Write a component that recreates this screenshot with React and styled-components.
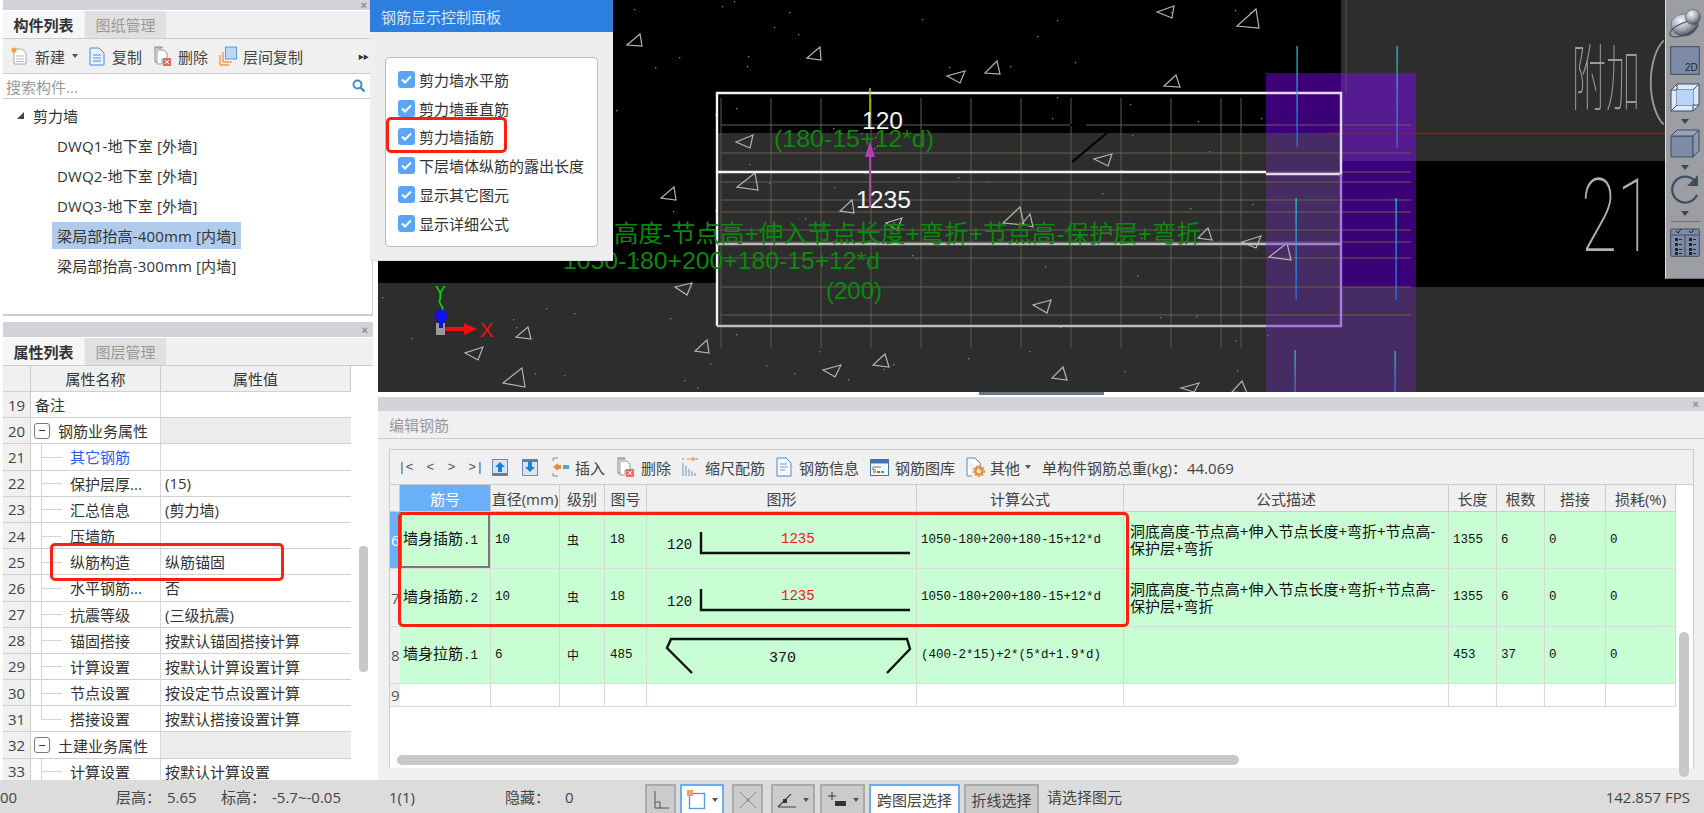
import React from 'react';
import styled, { createGlobalStyle } from 'styled-components';

const UI_FONT = '"Open Sans", "Noto Sans CJK SC", sans-serif';
const CELL_FONT = '"Liberation Mono", "Noto Sans CJK SC", monospace';

const GlobalStyle = createGlobalStyle`
  html, body { margin: 0; padding: 0; background: #fff; }
  body { font-family: ${UI_FONT}; font-size: 15px; color: #333; }
`;

const Page = styled.div`
  width: 1704px;
  height: 813px;
  display: flex;
  flex-direction: column;
  overflow: hidden;
  background: #fff;
`;

const Main = styled.div`
  height: 780px;
  display: flex;
`;

const LeftColumn = styled.div`
  width: 378px;
  flex: none;
  display: flex;
  flex-direction: column;
  gap: 6px;
  padding: 0 5px 0 3px;
  box-sizing: border-box;
`;

const RightColumn = styled.div`
  flex: 1;
  min-width: 0;
  display: flex;
  flex-direction: column;
`;

const DockHead = styled.div`
  height: ${(p) => p.$h}px;
  flex: none;
  background: #d2d3d8;
  display: flex;
  justify-content: flex-end;
  align-items: center;
  padding-right: 5px;
  font: bold 11px/10px "Liberation Sans", sans-serif;
  color: #8a8a8a;
`;

const TopDock = styled.div`
  height: 316px;
  flex: none;
  display: flex;
  flex-direction: column;
  border-right: 1px solid #ccc;
  border-bottom: 2px solid #ccc;
  box-sizing: border-box;
`;

const BottomDock = styled.div`
  flex: 1;
  min-height: 0;
  display: flex;
  flex-direction: column;
`;

const TabBar = styled.div`
  height: 27px;
  flex: none;
  margin-top: 1px;
  display: flex;
  gap: 1px;
  background: #f0f0f0;
  border-bottom: 1px solid #ccc;
`;

const Tab = styled.div`
  width: 81px;
  display: flex;
  align-items: center;
  justify-content: center;
  font-size: 15px;
  font-weight: ${(p) => (p.$active ? 700 : 400)};
  color: ${(p) => (p.$active ? '#333' : '#999')};
  background: ${(p) => (p.$active ? '#f6f6f6' : '#e0e0e0')};
`;

const ListToolbar = styled.div`
  height: 34px;
  flex: none;
  display: flex;
  align-items: center;
  gap: 11px;
  padding: 0 4px 0 8px;
  background: #f0f0f0;
  border-bottom: 1px solid #ccc;
`;

const ToolItem = styled.div`
  display: flex;
  align-items: center;
  gap: ${(p) => p.$gap || 6}px;
  margin-left: ${(p) => p.$ml || 0}px;
  color: #444;
  white-space: nowrap;
`;

const MoreMark = styled.div`
  margin-left: auto;
  font-size: 6px;
  letter-spacing: -1px;
  color: #333;
`;

const SearchRow = styled.div`
  height: 24px;
  flex: none;
  display: flex;
  align-items: center;
  justify-content: space-between;
  padding: 0 6px 0 3px;
  color: #9a9a9a;
  border-bottom: 1px solid #ccc;
`;

const Tree = styled.div`
  flex: 1;
  padding-top: 1px;
  display: flex;
  flex-direction: column;
`;

const TreeRoot = styled.div`
  height: 30px;
  display: flex;
  align-items: center;
  gap: 9px;
  padding-left: 14px;
`;

const TreeTriangle = styled.span`
  width: 0;
  height: 0;
  border-left: 7px solid transparent;
  border-bottom: 7px solid #444;
`;

const TreeLeaf = styled.div`
  height: 30px;
  display: flex;
  align-items: center;
  padding-left: 49px;
`;

const LeafLabel = styled.span`
  padding: 3px 5px;
  letter-spacing: 0.15px;
  background: ${(p) => (p.$selected ? '#b0cbec' : 'transparent')};
`;

const PropBody = styled.div`
  flex: 1;
  min-height: 0;
  display: flex;
  overflow: hidden;
`;

const PropTable = styled.div`
  width: 348px;
  flex: none;
`;

const PropRowWrap = styled.div`
  height: ${(p) => p.$h || 26.2}px;
  box-sizing: border-box;
  display: grid;
  grid-template-columns: 28px 130px 190px;
  border-bottom: 1px solid #d0d0d0;
`;

const PropHeadCell = styled.div`
  background: #f0f0f0;
  border-right: 1px solid #ccc;
  display: flex;
  align-items: center;
  justify-content: center;
`;

const PropNo = styled.div`
  background: #f0f0f0;
  border-right: 1px solid #ccc;
  display: flex;
  align-items: center;
  justify-content: center;
  font-size: 15px;
  color: #444;
`;

const PropName = styled.div`
  position: relative;
  display: flex;
  align-items: center;
  gap: 8px;
  padding-left: ${(p) => (p.$child ? 39 : 4)}px;
  border-right: 1px solid #d8d8d8;
  white-space: nowrap;
  color: ${(p) => (p.$link ? '#2a5cf0' : '#333')};
  ${(p) =>
    p.$child &&
    `
    &::before {
      content: '';
      position: absolute;
      left: 10px;
      top: 0;
      bottom: ${p.$last ? '50%' : '-1px'};
      border-left: 1px solid #d4d4d4;
    }
    &::after {
      content: '';
      position: absolute;
      left: 10px;
      top: 50%;
      width: 21px;
      border-top: 1px solid #d4d4d4;
    }
  `}
`;

const PropValue = styled.div`
  display: flex;
  align-items: center;
  padding-left: 4px;
  white-space: nowrap;
  background: ${(p) => (p.$group ? '#ececec' : 'transparent')};
`;

const MinusBox = styled.span`
  width: 14px;
  height: 14px;
  margin-left: -1px;
  border: 1px solid #777;
  border-radius: 3px;
  display: flex;
  align-items: center;
  justify-content: center;
  font: 13px/1 "Liberation Sans", sans-serif;
  color: #333;
`;

const PropScroll = styled.div`
  flex: 1;
  padding-left: 8px;
`;

const PropThumb = styled.div`
  width: 9px;
  height: 126px;
  margin-top: 180px;
  border-radius: 4px;
  background: #c8c8c8;
`;

const Canvas = styled.div`
  height: 392px;
  flex: none;
  position: relative;
  background: #000;
`;

const CanvasArt = styled.svg`
  display: block;
  width: 1326px;
  height: 392px;
`;

const GreenText = styled.text`
  font-family: "Liberation Sans", "Noto Sans CJK SC", sans-serif;
  font-size: 24px;
  fill: #0a8a0a;
`;

const DimText = styled.text`
  font-family: "Liberation Sans", sans-serif;
  font-size: 24px;
  fill: #f4f4f4;
`;

const CadText = styled.text`
  font-family: Roboto, "Noto Sans CJK SC", sans-serif;
  font-weight: 100;
  font-size: ${(p) => p.$size}px;
  fill: ${(p) => p.$fill || '#9a9a9a'};
`;

const AxisLabel = styled.text`
  font-family: "Liberation Sans", sans-serif;
  font-size: ${(p) => p.$size || 20}px;
  fill: ${(p) => p.$color};
`;

const ControlPanel = styled.div`
  position: absolute;
  left: -8px;
  top: 0;
  width: 243px;
  height: 261px;
  background: #eee;
  border-bottom: 1px solid #ddd;
  box-sizing: border-box;
  display: flex;
  flex-direction: column;
`;

const ControlTitle = styled.div`
  height: 32px;
  flex: none;
  display: flex;
  align-items: center;
  padding-left: 11px;
  background: #2c7fdf;
  color: #d6e6f8;
`;

const ControlBox = styled.div`
  margin: 25px 15px 0;
  height: 190px;
  box-sizing: border-box;
  padding-top: 7px;
  padding-left: 12px;
  background: #fff;
  border: 1px solid #bbb;
  border-radius: 4px;
`;

const CheckRow = styled.div`
  height: 28.8px;
  display: flex;
  align-items: center;
  gap: 4px;
  white-space: nowrap;
  color: #333;
`;

const CheckMark = styled.span`
  width: 17px;
  height: 17px;
  border-radius: 3px;
  background: #5aa5f5;
  display: flex;
  align-items: center;
  justify-content: center;
`;

const RedFrame = styled.div`
  position: absolute;
  left: ${(p) => p.$l}px;
  top: ${(p) => p.$t}px;
  width: ${(p) => p.$w}px;
  height: ${(p) => p.$h}px;
  box-sizing: border-box;
  border: 3px solid #fb2010;
  border-radius: 5px;
  pointer-events: none;
  z-index: 5;
`;

const ViewBar = styled.div`
  position: absolute;
  right: 0;
  top: 0;
  width: 39px;
  height: 279px;
  box-sizing: border-box;
  padding-top: 8px;
  background: #9d9ea3;
  border-left: 1px solid #ddd;
  border-bottom: 1px solid #777;
  display: flex;
  flex-direction: column;
  align-items: center;
`;

const ViewGap = styled.div`
  height: ${(p) => p.$h}px;
  flex: none;
`;

const ViewArrow = styled.div`
  width: 0;
  height: 0;
  margin: ${(p) => p.$m || '7px 0 5px'};
  border-left: 4px solid transparent;
  border-right: 4px solid transparent;
  border-top: 5px solid #3b4554;
`;

const ViewRule = styled.div`
  width: 29px;
  height: 1px;
  margin: 5px 0;
  background: #6f7177;
`;

const Splitter = styled.div`
  height: 5px;
  flex: none;
  display: flex;
  justify-content: center;
  background: #fff;
`;

const SplitHandle = styled.div`
  width: 125px;
  height: 3px;
  background: #6b7685;
`;

const Editor = styled.div`
  flex: 1;
  min-height: 0;
  display: flex;
  flex-direction: column;
  background: #f0f0f0;
`;

const EditorTitle = styled.div`
  height: 27px;
  flex: none;
  display: flex;
  align-items: center;
  padding-left: 11px;
  color: #999;
  border-bottom: 1px solid #ccc;
`;

const EditorFrame = styled.div`
  height: 319px;
  flex: none;
  margin: 10px 10px 0 11px;
  box-sizing: border-box;
  border: 1px solid #ccc;
  border-bottom: 0;
  display: flex;
  flex-direction: column;
  background: #fff;
`;

const BarToolbar = styled.div`
  height: 35px;
  flex: none;
  display: flex;
  align-items: center;
  gap: 11px;
  padding-left: 8px;
  background: #f0f0f0;
  border-bottom: 1px solid #ccc;
  box-sizing: border-box;
`;

const NavGroup = styled.div`
  display: flex;
  gap: 13px;
  width: 83px;
  flex: none;
  white-space: nowrap;
  font: 13px "Liberation Mono", monospace;
  color: #555;
`;

const TableWrap = styled.div`
  height: 270px;
  flex: none;
  display: flex;
`;

const BarTable = styled.div`
  width: 1286px;
  flex: none;
`;

const columns = '10px 91px 69px 45px 42px 270px 207px 325px 48px 48px 61px 70px';

const HeadRow = styled.div`
  height: 26px;
  display: grid;
  grid-template-columns: ${columns};
  background: #f0f0f0;
  border-bottom: 1px solid #ccc;
`;

const HeadCell = styled.div`
  display: flex;
  align-items: center;
  justify-content: center;
  white-space: nowrap;
  overflow: hidden;
  border-right: 1px solid #ccc;
  background: ${(p) => (p.$active ? '#6ab0f8' : 'transparent')};
  color: ${(p) => (p.$active ? '#fff' : '#444')};
`;

const BodyRow = styled.div`
  height: ${(p) => p.$h}px;
  box-sizing: border-box;
  display: grid;
  grid-template-columns: ${columns};
  background: ${(p) => (p.$empty ? '#fff' : '#c9fdd3')};
  border-bottom: 1px solid #d8dcd8;
`;

const RowHead = styled.div`
  display: flex;
  align-items: center;
  overflow: hidden;
  padding-left: 1px;
  font-size: 15px;
  background: ${(p) => (p.$active ? '#6ab0f8' : '#f0f0f0')};
  color: ${(p) => (p.$active ? '#fff' : '#555')};
`;

const BodyCell = styled.div`
  display: flex;
  align-items: center;
  box-sizing: border-box;
  padding-left: ${(p) => p.$pad ?? 4}px;
  border-right: 1px solid #d4dcd4;
  white-space: pre-line;
  overflow: hidden;
  color: #111;
  font-family: ${(p) => (p.$mono ? CELL_FONT : UI_FONT)};
  font-size: ${(p) => (p.$mono ? '12.5px' : `${p.$size || 15}px`)};
  line-height: 17px;
  ${(p) => p.$focus && 'box-shadow: inset 0 0 0 2px #777;'}
`;

const NameSuffix = styled.span`
  font-family: "Liberation Mono", monospace;
  font-size: 12.5px;
`;

const ShapeArt = styled.svg`
  display: block;
  width: 269px;
  height: 57px;
`;

const ShapeLabel = styled.text`
  font-family: "Liberation Mono", monospace;
  font-size: ${(p) => p.$size || 14}px;
  fill: ${(p) => p.$color || '#111'};
`;

const BarScroll = styled.div`
  flex: 1;
  padding-left: 3px;
`;

const BarThumb = styled.div`
  width: 10px;
  height: 145px;
  margin-top: 147px;
  border-radius: 5px;
  background: #c8c8c8;
  position: relative;
`;

const HScrollRow = styled.div`
  padding-left: 7px;
  height: 10px;
  flex: none;
`;

const HThumb = styled.div`
  width: 842px;
  height: 10px;
  border-radius: 5px;
  background: #c8c8c8;
`;

const StatusBar = styled.div`
  height: 33px;
  flex: none;
  display: flex;
  align-items: center;
  background: #dcdcdc;
  color: #444;
  font-size: 15px;
  white-space: nowrap;
`;

const StatusCell = styled.div`
  width: ${(p) => p.$w}px;
  flex: none;
`;

const StatusButton = styled.div`
  align-self: flex-end;
  height: 29px;
  box-sizing: border-box;
  margin-right: ${(p) => p.$mr ?? 4}px;
  width: ${(p) => p.$w}px;
  flex: none;
  display: flex;
  align-items: center;
  justify-content: center;
  gap: 6px;
  border: 2px solid ${(p) => (p.$on ? '#69aef5' : '#aaa')};
  border-bottom: 0;
  background: ${(p) => (p.$on ? '#fff' : '#cbcbcb')};
  color: #444;
`;

const SmallCaret = styled.span`
  width: 0;
  height: 0;
  border-left: 3px solid transparent;
  border-right: 3px solid transparent;
  border-top: 4px solid #555;
`;

const Fps = styled.div`
  margin-left: auto;
  padding-right: 14px;
`;

/* icons */
const DocNew = () => (
  <svg width="17" height="20" viewBox="0 0 17 20">
    <path d="M3 3h8l4 4v11H3z" fill="#fff" stroke="#aaa" />
    <path d="M5 10h8M5 13h8M5 15.5h8" stroke="#bbb" />
    <circle cx="3" cy="4" r="2.6" fill="#f5a23c" />
  </svg>
);
const DocCopy = () => (
  <svg width="16" height="20" viewBox="0 0 16 20">
    <path d="M1 2h9l5 5v12H1z" fill="#eaf2fb" stroke="#4a8ad0" />
    <path d="M4 9h8M4 12h8M4 15h8" stroke="#4a8ad0" />
  </svg>
);
const DocDelete = () => (
  <svg width="19" height="20" viewBox="0 0 19 20">
    <path d="M1 1h8l-0 1H2v14h4" fill="none" stroke="#888" />
    <path d="M4 4h7l3 3v6H9v5H4z" fill="#fff" stroke="#999" />
    <rect x="10" y="12" width="8" height="8" fill="#e96a6a" />
    <path d="M12 14l4 4M16 14l-4 4" stroke="#fff" />
  </svg>
);
const FloorCopy = () => (
  <svg width="18" height="20" viewBox="0 0 18 20">
    <path d="M1 19V9M1 19h9M4 16V6M4 16h9" fill="none" stroke="#ef9a4a" strokeWidth="1.4" />
    <rect x="6.5" y="1" width="11" height="12" fill="#bcd6f6" stroke="#5a9ae0" />
  </svg>
);
const SearchIcon = () => (
  <svg width="14" height="14" viewBox="0 0 14 14">
    <circle cx="5.5" cy="5.5" r="4" fill="none" stroke="#3d8fc9" strokeWidth="2" />
    <path d="M8.5 8.5l4 4" stroke="#3d8fc9" strokeWidth="2.4" />
  </svg>
);
const Caret = () => <SmallCaret />;

const ArrowBox = ({ down }) => (
  <svg width="16" height="17" viewBox="0 0 16 17">
    <rect x="0.5" y="0.5" width="15" height="16" fill="#d7e4f2" stroke="#6b8bb0" />
    <rect x="0.5" y={down ? 0.5 : 14} width="15" height="2.5" fill="#6b7d90" />
    <path
      d={down ? 'M8 13l-5-5h3V3h4v5h3z' : 'M8 3l5 5h-3v5H6V8H3z'}
      fill="#1f7fdc"
    />
  </svg>
);
const InsertIcon = () => (
  <svg width="17" height="20" viewBox="0 0 17 20">
    <path d="M6 1H1v3M1 16v3h5" fill="none" stroke="#888" />
    <path d="M1 10l5-4v2h3v4H6v2z" fill="#ef8a2a" />
    <rect x="11" y="8" width="6" height="4" fill="#5a9ae0" />
  </svg>
);
const ScaleIcon = () => (
  <svg width="16" height="20" viewBox="0 0 16 20">
    <path d="M5 2h8M10 0l3 2-3 2" fill="none" stroke="#ef8a2a" />
    <path d="M1 1v2M15 1v2" stroke="#888" />
    <path d="M1 6v13M4 9v10M7 12v7M10 14v5M13 16v3" stroke="#9ab4cc" strokeWidth="1.5" />
  </svg>
);
const InfoIcon = () => (
  <svg width="16" height="20" viewBox="0 0 16 20">
    <path d="M1 1h9l5 5v13H1z" fill="#f4f8fd" stroke="#4a8ad0" />
    <path d="M4 7h7M4 10h8M4 13h5" stroke="#8a9ab0" />
  </svg>
);
const LibraryIcon = () => (
  <svg width="19" height="17" viewBox="0 0 19 17">
    <rect x="0.5" y="0.5" width="18" height="16" fill="#f4f8fd" stroke="#3f74b0" />
    <rect x="0.5" y="0.5" width="18" height="4" fill="#3f74b0" />
    <path d="M3 8h8M3 8v3h3" fill="none" stroke="#777" />
    <path d="M3 13h3" stroke="#e0a030" strokeWidth="2" />
    <path d="M7 13h3" stroke="#d05050" strokeWidth="2" />
    <path d="M11 13h3" stroke="#50a050" strokeWidth="2" />
  </svg>
);
const OtherIcon = () => (
  <svg width="19" height="20" viewBox="0 0 19 20">
    <path d="M1 1h8l5 5v8M6 19H1V1" fill="#fff" stroke="#4a8ad0" />
    <circle cx="13" cy="14" r="3.6" fill="none" stroke="#ef8a2a" strokeWidth="2.4" />
    <circle cx="13" cy="14" r="5.4" fill="none" stroke="#ef8a2a" strokeWidth="1.2" strokeDasharray="2 1.6" />
  </svg>
);

const OrthoIcon = () => (
  <svg width="18" height="20" viewBox="0 0 18 20">
    <path d="M3 1v17h14" fill="none" stroke="#555" />
    <path d="M3 12h5v6" fill="none" stroke="#555" />
  </svg>
);
const SnapIcon = () => (
  <svg width="19" height="20" viewBox="0 0 19 20">
    <rect x="2.5" y="3.5" width="15" height="15" fill="#fff" stroke="#5a9ae0" strokeWidth="1.4" />
    <rect x="0" y="0" width="6" height="6" fill="#f0a060" />
  </svg>
);
const CrossIcon = () => (
  <svg width="18" height="20" viewBox="0 0 18 20">
    <path d="M1 2l16 16M17 2L1 18" stroke="#8a8a8a" />
    <rect x="7.5" y="8.5" width="3" height="3" fill="#9a9a9a" />
  </svg>
);
const AngleIcon = () => (
  <svg width="20" height="18" viewBox="0 0 20 18">
    <path d="M1 16h18M1 16L14 3" fill="none" stroke="#444" strokeWidth="1.2" />
    <rect x="6" y="8" width="4" height="4" fill="#333" />
  </svg>
);
const PlusBarIcon = () => (
  <svg width="20" height="18" viewBox="0 0 20 18">
    <path d="M5 1v8M1 5h8" stroke="#333" />
    <rect x="8" y="10" width="11" height="5" fill="#333" />
  </svg>
);

const GlobeIcon = () => (
  <svg width="33" height="30" viewBox="0 0 33 30">
    <defs>
      <radialGradient id="globe" cx="38%" cy="30%" r="75%">
        <stop offset="0" stopColor="#f6f7f9" />
        <stop offset="0.5" stopColor="#aab1bc" />
        <stop offset="1" stopColor="#3f4854" />
      </radialGradient>
    </defs>
    <ellipse cx="15" cy="17" rx="13" ry="11" fill="url(#globe)" stroke="#4f5864" strokeWidth="0.6" />
    <ellipse cx="15" cy="21" rx="15" ry="6" fill="none" stroke="#3f4854" transform="rotate(-22 15 21)" />
    <circle cx="24" cy="9" r="7.5" fill="url(#globe)" stroke="#4f5864" strokeWidth="0.6" />
  </svg>
);
const TwoDIcon = () => (
  <svg width="30" height="29" viewBox="0 0 30 29">
    <rect x="0.7" y="0.7" width="28.6" height="27.6" fill="#7d8ba5" stroke="#3e4c62" />
    <text x="15" y="25" fontFamily="Liberation Sans, sans-serif" fontSize="10" fill="#20262e">2D</text>
  </svg>
);
const WireCube = () => (
  <svg width="30" height="29" viewBox="0 0 30 29">
    <path d="M1 7L7 1h22v21l-6 6H1z" fill="#dbe9ff" stroke="#3e4c62" />
    <path d="M7 1v21h22M7 22l-6 6M1 7h22v21M23 7l6-6" fill="none" stroke="#3e4c62" />
    <rect x="7" y="7" width="16" height="15" fill="#b7d4fb" />
  </svg>
);
const SolidCube = () => (
  <svg width="30" height="29" viewBox="0 0 30 29">
    <path d="M1 7h22v21H1z" fill="#7d8ba5" stroke="#3e4c62" />
    <path d="M1 7l6-6h22l-6 6z" fill="#97a3b8" stroke="#3e4c62" />
    <path d="M23 7l6-6v21l-6 6z" fill="#8a97ad" stroke="#3e4c62" />
  </svg>
);
const RotateIcon = () => (
  <svg width="30" height="29" viewBox="0 0 30 29">
    <path d="M25 6A13 13 0 1 0 27 20" fill="none" stroke="#3e4c62" strokeWidth="2.2" />
    <path d="M28 0v11H17z" fill="#3e4c62" />
  </svg>
);
const ChecklistIcon = () => (
  <svg width="30" height="30" viewBox="0 0 30 30">
    <rect x="0.7" y="2" width="28.6" height="27.3" rx="1" fill="#7d8ba5" stroke="#3e4c62" />
    <path d="M1 8h28M15 8v21" stroke="#3e4c62" />
    <path d="M6 4l2 2 3-4M19 4l2 2 3-4" fill="none" stroke="#1d2530" />
    {[11, 16, 21, 25].map((y) => (
      <g key={y} fill="#1d2530">
        <rect x="5" y={y} width="3" height="3" />
        <rect x="9" y={y + 1} width="3" height="1" />
        <rect x="19" y={y} width="3" height="3" />
        <rect x="23" y={y + 1} width="3" height="1" />
      </g>
    ))}
  </svg>
);
const Tick = () => (
  <svg width="11" height="9" viewBox="0 0 11 9">
    <path d="M1 4.5l3 3 6-6" fill="none" stroke="#fff" strokeWidth="2" />
  </svg>
);

/* canvas data */
const triangles = [
  '640,34 627,45 642,46', '820,47 807,58 821,60', '674,187 661,198 676,200',
  '753,135 736,142 750,148', '755,173 737,187 758,190', '852,200 840,211 854,213',
  '692,283 675,287 687,295', '528,327 516,337 531,339', '483,347 465,353 478,360',
  '522,368 503,383 525,387', '707,340 695,351 709,353', '841,365 823,370 835,377',
  '1174,6 1157,12 1172,18', '1256,9 1237,26 1259,28', '965,71 947,76 960,83',
  '997,61 985,73 1000,74', '1176,75 1164,86 1180,87', '1112,154 1094,159 1108,166',
  '1020,207 1003,223 1024,225', '1030,214 1022,224 1033,227', '902,218 886,223 897,230',
  '1208,228 1198,238 1212,240', '1261,236 1242,242 1256,248', '1287,243 1269,257 1291,260',
  '1051,300 1033,305 1047,313', '885,354 873,365 889,367', '1063,367 1052,378 1067,380',
  '1199,383 1181,388 1194,392', '1242,381 1232,392 1247,393',
];

const dots = [];
let seed = 7;
for (let i = 0; i < 110; i += 1) {
  seed = (seed * 16807) % 2147483647;
  const x = 380 + (seed % 890);
  seed = (seed * 16807) % 2147483647;
  const y = seed % 390;
  dots.push([x, y]);
}

const gridX = [721, 771, 821, 871, 921, 971, 1021, 1071, 1121, 1171, 1221, 1241];
const gridY = [125, 153, 172, 182, 200, 212, 230, 242, 258, 287, 315];
const colorLines = [
  [1296.5, 46, 147], [1396.5, 46, 148], [1295.5, 198, 300],
  [1395.5, 198, 300], [1294.5, 350, 392], [1394.5, 351, 392],
];

const CanvasDrawing = () => (
  <CanvasArt viewBox="378 0 1326 392">
    <defs>
      <linearGradient id="rebarBlue" x1="0" y1="0" x2="0" y2="1">
        <stop offset="0" stopColor="#14d2d2" />
        <stop offset="1" stopColor="#3a6cf0" />
      </linearGradient>
    </defs>
    <rect x="378" y="283" width="339" height="109" fill="#2d2d2d" />
    <rect x="717" y="133" width="624" height="259" fill="#2d2d2d" />
    <rect x="1341" y="0" width="363" height="161" fill="#2d2d2d" />
    <rect x="1341" y="287" width="363" height="105" fill="#2d2d2d" />
    <rect x="1266" y="73" width="75" height="60" fill="#3c0078" />
    <rect x="1266" y="133" width="75" height="259" fill="#472c63" />
    <rect x="1341" y="73" width="75" height="88" fill="#561b90" />
    <rect x="1341" y="161" width="75" height="126" fill="#3c0078" />
    <rect x="1341" y="287" width="75" height="105" fill="#472c63" />
    {dots.map(([x, y]) => (
      <rect key={`${x}-${y}`} x={x} y={y} width="1.3" height="1.3" fill="#858585" />
    ))}
    {gridX.map((x) => (
      <line key={x} x1={x} x2={x} y1="98" y2="348" stroke="#5f5c48" />
    ))}
    {gridY.map((y) => (
      <line key={y} x1="721" x2="1411" y1={y} y2={y} stroke="#66634e" />
    ))}
    <line x1="1346" x2="1346" y1="0" y2="92" stroke="#555" />
    <line x1="1325" x2="1665" y1="133.5" y2="133.5" stroke="#8a2222" strokeWidth="1.4" />
    {triangles.map((t) => (
      <polygon key={t} points={t} fill="none" stroke="#b4b4b4" strokeWidth="1.2" />
    ))}
    <g fill="none" strokeWidth="2.4">
      <path d="M1266 93H717v233M717 172H1266" stroke="#f4f4f4" />
      <path d="M717 244H1266M717 326H1266" stroke="#bdbdbd" />
      <path d="M1266 93h75v81h-75" stroke="#e6d8f8" />
      <path d="M1266 244h75M1341 174v152h-75" stroke="#a87ae0" />
    </g>
    <path d="M1107 133L1072 162" stroke="#000" strokeWidth="2" />
    <path d="M1070 125h16" stroke="#000" strokeWidth="2" />
    {colorLines.map(([x, y1, y2]) => (
      <rect key={`${x}-${y1}`} x={x} y={y1} width="1.2" height={y2 - y1} fill="url(#rebarBlue)" />
    ))}
    <line x1="870" x2="870" y1="88" y2="118" stroke="#c8c800" strokeWidth="1.5" />
    <line x1="870" x2="870" y1="150" y2="207" stroke="#b040b0" strokeWidth="2" />
    <path d="M870 141l-5 16h10z" fill="#b040b0" />
    <GreenText x="774" y="147" textLength="160" lengthAdjust="spacingAndGlyphs">(180-15+12*d)</GreenText>
    <GreenText x="614" y="242" textLength="587" lengthAdjust="spacingAndGlyphs">高度-节点高+伸入节点长度+弯折+节点高-保护层+弯折</GreenText>
    <GreenText x="563" y="269" textLength="317" lengthAdjust="spacingAndGlyphs">1050-180+200+180-15+12*d</GreenText>
    <GreenText x="826" y="299" textLength="56" lengthAdjust="spacingAndGlyphs">(200)</GreenText>
    <DimText x="862" y="129" textLength="41" lengthAdjust="spacingAndGlyphs">120</DimText>
    <DimText x="856" y="208" textLength="55" lengthAdjust="spacingAndGlyphs">1235</DimText>
    <CadText $size="72" x="1572" y="104" textLength="68" lengthAdjust="spacingAndGlyphs">附加</CadText>
    <CadText $size="84" x="1645" y="106" textLength="20" lengthAdjust="spacingAndGlyphs">(</CadText>
    <CadText $size="102" $fill="#b0b0b0" x="1581" y="251" textLength="72" lengthAdjust="spacingAndGlyphs">21</CadText>
    <AxisLabel $color="#00e000" $size="16" x="435" y="298">Y</AxisLabel>
    <path d="M441 298c-6 6 6 8 0 14" fill="none" stroke="#10c810" strokeWidth="2" />
    <rect x="436" y="323" width="9" height="12" fill="#9a9a9a" />
    <rect x="439" y="312" width="4" height="16" fill="#1010e8" />
    <circle cx="441" cy="316" r="6.5" fill="#1010e8" />
    <path d="M445 327h19v-4l13 6-13 6v-4h-19z" fill="#f01010" />
    <AxisLabel $color="#f01010" x="480" y="337">X</AxisLabel>
  </CanvasArt>
);

/* table data */
const treeLeaves = [
  { name: 'DWQ1-地下室 [外墙]' },
  { name: 'DWQ2-地下室 [外墙]' },
  { name: 'DWQ3-地下室 [外墙]' },
  { name: '梁局部抬高-400mm [内墙]', selected: true },
  { name: '梁局部抬高-300mm [内墙]' },
];

const propRows = [
  { no: 19, name: '备注' },
  { no: 20, name: '钢筋业务属性', group: true },
  { no: 21, name: '其它钢筋', child: true, link: true },
  { no: 22, name: '保护层厚...', value: '(15)', child: true },
  { no: 23, name: '汇总信息', value: '(剪力墙)', child: true },
  { no: 24, name: '压墙筋', child: true },
  { no: 25, name: '纵筋构造', value: '纵筋锚固', child: true },
  { no: 26, name: '水平钢筋...', value: '否', child: true },
  { no: 27, name: '抗震等级', value: '(三级抗震)', child: true },
  { no: 28, name: '锚固搭接', value: '按默认锚固搭接计算', child: true },
  { no: 29, name: '计算设置', value: '按默认计算设置计算', child: true },
  { no: 30, name: '节点设置', value: '按设定节点设置计算', child: true },
  { no: 31, name: '搭接设置', value: '按默认搭接设置计算', child: true, last: true },
  { no: 32, name: '土建业务属性', group: true },
  { no: 33, name: '计算设置', value: '按默认计算设置', child: true },
];

const checks = ['剪力墙水平筋', '剪力墙垂直筋', '剪力墙插筋', '下层墙体纵筋的露出长度', '显示其它图元', '显示详细公式'];

const headers = ['筋号', '直径(mm)', '级别', '图号', '图形', '计算公式', '公式描述', '长度', '根数', '搭接', '损耗(%)'];

const formula = '1050-180+200+180-15+12*d';
const description = '洞底高度-节点高+伸入节点长度+弯折+节点高-\n保护层+弯折';

const rebars = [
  { no: 6, name: '墙身插筋', suffix: '.1', dia: 10, grade: '虫', fig: 18, shape: 'hook', formula, description, len: 1355, count: 6, h: 57, active: true },
  { no: 7, name: '墙身插筋', suffix: '.2', dia: 10, grade: '虫', fig: 18, shape: 'hook', formula, description, len: 1355, count: 6, h: 58 },
  { no: 8, name: '墙身拉筋', suffix: '.1', dia: 6, grade: '中', fig: 485, shape: 'tie', formula: '(400-2*15)+2*(5*d+1.9*d)', description: '', len: 453, count: 37, h: 57 },
];

const RebarShape = ({ kind }) => (
  <ShapeArt viewBox="0 0 269 57">
    {kind === 'hook' ? (
      <>
        <ShapeLabel x="20" y="37">120</ShapeLabel>
        <path d="M54 20v21h209" fill="none" stroke="#111" strokeWidth="2.4" />
        <ShapeLabel $color="#f01818" x="134" y="31">1235</ShapeLabel>
      </>
    ) : (
      <>
        <path d="M45 46L20 21l4-9h236l3 10-23 24" fill="none" stroke="#111" strokeWidth="2.4" />
        <ShapeLabel $size="15" x="122" y="35">370</ShapeLabel>
      </>
    )}
  </ShapeArt>
);

const PropRow = ({ row }) => (
  <PropRowWrap>
    <PropNo>{row.no}</PropNo>
    <PropName $child={row.child} $last={row.last} $link={row.link}>
      {row.group && <MinusBox>−</MinusBox>}
      {row.name}
    </PropName>
    <PropValue $group={row.group}>{row.value}</PropValue>
  </PropRowWrap>
);

const RebarRow = ({ row }) => (
  <BodyRow $h={row.h}>
    <RowHead $active={row.active}>{row.no}</RowHead>
    <BodyCell $focus={row.active} $pad={3}>
      <span>{row.name}<NameSuffix>{row.suffix}</NameSuffix></span>
    </BodyCell>
    <BodyCell $mono>{row.dia}</BodyCell>
    <BodyCell $pad={7} $size={12}>{row.grade}</BodyCell>
    <BodyCell $mono $pad={5}>{row.fig}</BodyCell>
    <BodyCell $pad={0}><RebarShape kind={row.shape} /></BodyCell>
    <BodyCell $mono>{row.formula}</BodyCell>
    <BodyCell $pad={6}>{row.description}</BodyCell>
    <BodyCell $mono>{row.len}</BodyCell>
    <BodyCell $mono>{row.count}</BodyCell>
    <BodyCell $mono>0</BodyCell>
    <BodyCell $mono>0</BodyCell>
  </BodyRow>
);

const EmptyRow = () => (
  <BodyRow $h={23} $empty>
    <RowHead>9</RowHead>
    {headers.map((h) => (
      <BodyCell key={h} />
    ))}
  </BodyRow>
);

export default function App() {
  return (
    <>
      <GlobalStyle />
      <Page>
        <Main>
          <LeftColumn>
            <TopDock>
              <DockHead $h={10}>×</DockHead>
              <TabBar>
                <Tab $active>构件列表</Tab>
                <Tab>图纸管理</Tab>
              </TabBar>
              <ListToolbar>
                <ToolItem $gap={7}><DocNew />新建<Caret /></ToolItem>
                <ToolItem $gap={7}><DocCopy />复制</ToolItem>
                <ToolItem><DocDelete />删除</ToolItem>
                <ToolItem><FloorCopy />层间复制</ToolItem>
                <MoreMark>▶▶</MoreMark>
              </ListToolbar>
              <SearchRow>搜索构件...<SearchIcon /></SearchRow>
              <Tree>
                <TreeRoot><TreeTriangle />剪力墙</TreeRoot>
                {treeLeaves.map((leaf) => (
                  <TreeLeaf key={leaf.name}>
                    <LeafLabel $selected={leaf.selected}>{leaf.name}</LeafLabel>
                  </TreeLeaf>
                ))}
              </Tree>
            </TopDock>
            <BottomDock>
              <DockHead $h={15}>×</DockHead>
              <TabBar>
                <Tab $active>属性列表</Tab>
                <Tab>图层管理</Tab>
              </TabBar>
              <PropBody>
                <PropTable>
                  <PropRowWrap $h={26}>
                    <PropHeadCell />
                    <PropHeadCell>属性名称</PropHeadCell>
                    <PropHeadCell>属性值</PropHeadCell>
                  </PropRowWrap>
                  {propRows.map((row) => (
                    <PropRow key={row.no} row={row} />
                  ))}
                </PropTable>
                <PropScroll><PropThumb /></PropScroll>
              </PropBody>
            </BottomDock>
          </LeftColumn>
          <RightColumn>
            <Canvas>
              <CanvasDrawing />
              <ControlPanel>
                <ControlTitle>钢筋显示控制面板</ControlTitle>
                <ControlBox>
                  {checks.map((label) => (
                    <CheckRow key={label}>
                      <CheckMark><Tick /></CheckMark>
                      {label}
                    </CheckRow>
                  ))}
                </ControlBox>
              </ControlPanel>
              <ViewBar>
                <GlobeIcon />
                <ViewGap $h={8} />
                <TwoDIcon />
                <ViewGap $h={8} />
                <WireCube />
                <ViewArrow />
                <SolidCube />
                <ViewArrow />
                <RotateIcon />
                <ViewArrow $m="7px 0 0" />
                <ViewRule />
                <ChecklistIcon />
              </ViewBar>
            </Canvas>
            <Splitter><SplitHandle /></Splitter>
            <Editor>
              <DockHead $h={14}>×</DockHead>
              <EditorTitle>编辑钢筋</EditorTitle>
              <EditorFrame>
                <BarToolbar>
                  <NavGroup>
                    <span>|&lt;</span><span>&lt;</span><span>&gt;</span><span>&gt;|</span>
                  </NavGroup>
                  <ToolItem><ArrowBox /></ToolItem>
                  <ToolItem $ml={3}><ArrowBox down /></ToolItem>
                  <ToolItem $ml={3}><InsertIcon />插入</ToolItem>
                  <ToolItem><DocDelete />删除</ToolItem>
                  <ToolItem $gap={7}><ScaleIcon />缩尺配筋</ToolItem>
                  <ToolItem $gap={7}><InfoIcon />钢筋信息</ToolItem>
                  <ToolItem><LibraryIcon />钢筋图库</ToolItem>
                  <ToolItem $gap={5}><OtherIcon />其他<Caret /></ToolItem>
                  <ToolItem>单构件钢筋总重(kg)：44.069</ToolItem>
                </BarToolbar>
                <TableWrap>
                  <BarTable>
                    <HeadRow>
                      <HeadCell />
                      {headers.map((h, i) => (
                        <HeadCell key={h} $active={i === 0}>{h}</HeadCell>
                      ))}
                    </HeadRow>
                    {rebars.map((row) => (
                      <RebarRow key={row.no} row={row} />
                    ))}
                    <EmptyRow />
                  </BarTable>
                  <BarScroll><BarThumb /></BarScroll>
                </TableWrap>
                <HScrollRow><HThumb /></HScrollRow>
              </EditorFrame>
            </Editor>
          </RightColumn>
        </Main>
        <StatusBar>
          <StatusCell $w={116}>00</StatusCell>
          <StatusCell $w={51}>层高：</StatusCell>
          <StatusCell $w={54}>5.65</StatusCell>
          <StatusCell $w={51}>标高：</StatusCell>
          <StatusCell $w={117}>-5.7~-0.05</StatusCell>
          <StatusCell $w={116}>1(1)</StatusCell>
          <StatusCell $w={60}>隐藏：</StatusCell>
          <StatusCell $w={80}>0</StatusCell>
          <StatusButton $w={31}><OrthoIcon /></StatusButton>
          <StatusButton $w={44} $on $mr={8}><SnapIcon /><Caret /></StatusButton>
          <StatusButton $w={31} $mr={8}><CrossIcon /></StatusButton>
          <StatusButton $w={44} $mr={5}><AngleIcon /><Caret /></StatusButton>
          <StatusButton $w={45}><PlusBarIcon /><Caret /></StatusButton>
          <StatusButton $w={91} $on>跨图层选择</StatusButton>
          <StatusButton $w={75} $mr={8}>折线选择</StatusButton>
          请选择图元
          <Fps>142.857 FPS</Fps>
        </StatusBar>
        <RedFrame $l={386} $t={117} $w={121} $h={36} />
        <RedFrame $l={50} $t={543} $w={234} $h={38} />
        <RedFrame $l={398} $t={512} $w={731} $h={115} />
      </Page>
    </>
  );
}
